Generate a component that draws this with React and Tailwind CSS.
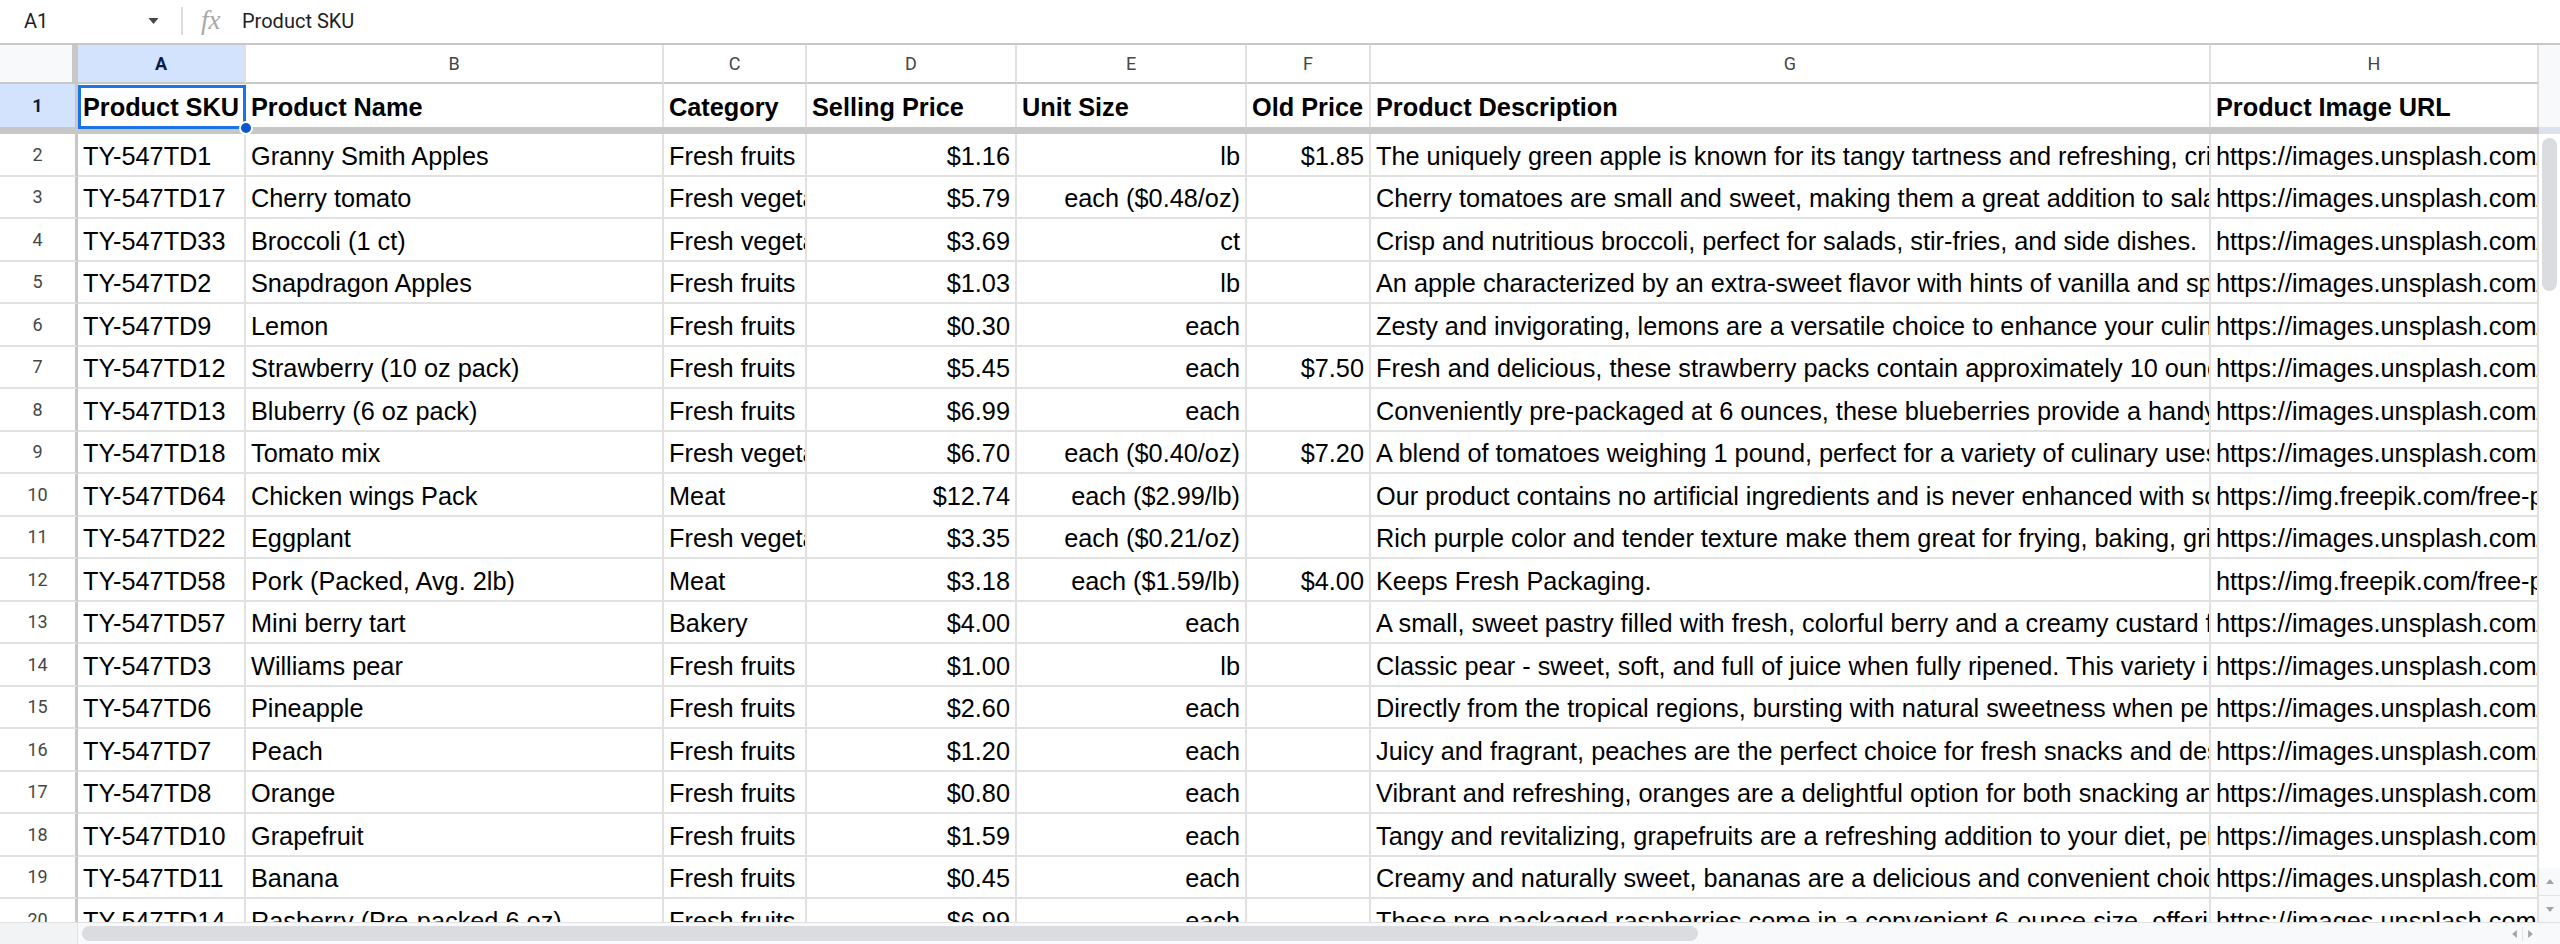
import React from "react";

const GRID = "grid grid-cols-[78px_168px_418px_143px_210px_230px_124px_840px_328px]";
const CELL_FONT = "font-['Liberation_Sans',Arial,sans-serif] text-[25.3px] text-black";
const UI_FONT = "font-['Roboto','Liberation_Sans',Arial,sans-serif]";

const U = "https://images.unsplash.com/photo-1568702846914-96b305d2aaeb?w=600";
const FP = "https://img.freepik.com/free-photo/raw-chicken-meat-isolated.jpg";

const rows = [
  ["TY-547TD1", "Granny Smith Apples", "Fresh fruits", "$1.16", "lb", "$1.85", "The uniquely green apple is known for its tangy tartness and refreshing, crisp texture.", U],
  ["TY-547TD17", "Cherry tomato", "Fresh vegetables", "$5.79", "each ($0.48/oz)", "", "Cherry tomatoes are small and sweet, making them a great addition to salads and snacks.", U],
  ["TY-547TD33", "Broccoli (1 ct)", "Fresh vegetables", "$3.69", "ct", "", "Crisp and nutritious broccoli, perfect for salads, stir-fries, and side dishes.", U],
  ["TY-547TD2", "Snapdragon Apples", "Fresh fruits", "$1.03", "lb", "", "An apple characterized by an extra-sweet flavor with hints of vanilla and spice.", U],
  ["TY-547TD9", "Lemon", "Fresh fruits", "$0.30", "each", "", "Zesty and invigorating, lemons are a versatile choice to enhance your culinary creations.", U],
  ["TY-547TD12", "Strawberry (10 oz pack)", "Fresh fruits", "$5.45", "each", "$7.50", "Fresh and delicious, these strawberry packs contain approximately 10 ounces of berries.", U],
  ["TY-547TD13", "Bluberry (6 oz pack)", "Fresh fruits", "$6.99", "each", "", "Conveniently pre-packaged at 6 ounces, these blueberries provide a handy snack.", U],
  ["TY-547TD18", "Tomato mix", "Fresh vegetables", "$6.70", "each ($0.40/oz)", "$7.20", "A blend of tomatoes weighing 1 pound, perfect for a variety of culinary uses.", U],
  ["TY-547TD64", "Chicken wings Pack", "Meat", "$12.74", "each ($2.99/lb)", "", "Our product contains no artificial ingredients and is never enhanced with solutions.", FP],
  ["TY-547TD22", "Eggplant", "Fresh vegetables", "$3.35", "each ($0.21/oz)", "", "Rich purple color and tender texture make them great for frying, baking, grilling.", U],
  ["TY-547TD58", "Pork (Packed, Avg. 2lb)", "Meat", "$3.18", "each ($1.59/lb)", "$4.00", "Keeps Fresh Packaging.", FP],
  ["TY-547TD57", "Mini berry tart", "Bakery", "$4.00", "each", "", "A small, sweet pastry filled with fresh, colorful berry and a creamy custard filling.", U],
  ["TY-547TD3", "Williams pear", "Fresh fruits", "$1.00", "lb", "", "Classic pear - sweet, soft, and full of juice when fully ripened. This variety is", U],
  ["TY-547TD6", "Pineapple", "Fresh fruits", "$2.60", "each", "", "Directly from the tropical regions, bursting with natural sweetness when perfectly ripe.", U],
  ["TY-547TD7", "Peach", "Fresh fruits", "$1.20", "each", "", "Juicy and fragrant, peaches are the perfect choice for fresh snacks and desserts.", U],
  ["TY-547TD8", "Orange", "Fresh fruits", "$0.80", "each", "", "Vibrant and refreshing, oranges are a delightful option for both snacking and juicing.", U],
  ["TY-547TD10", "Grapefruit", "Fresh fruits", "$1.59", "each", "", "Tangy and revitalizing, grapefruits are a refreshing addition to your diet, perfect for breakfast.", U],
  ["TY-547TD11", "Banana", "Fresh fruits", "$0.45", "each", "", "Creamy and naturally sweet, bananas are a delicious and convenient choice.", U],
  ["TY-547TD14", "Rasberry (Pre-packed 6 oz)", "Fresh fruits", "$6.99", "each", "", "These pre-packaged raspberries come in a convenient 6-ounce size, offering freshness.", U],
];

const headers = ["Product SKU", "Product Name", "Category", "Selling Price", "Unit Size", "Old Price", "Product Description", "Product Image URL"];
const letters = ["A", "B", "C", "D", "E", "F", "G", "H"];

function Cell({ children, right }) {
  return (
    <div
      className={`flex items-end overflow-hidden whitespace-nowrap border-r-2 border-b-2 border-[#e1e1e1] px-[5px] pb-[5px] leading-[28px] ${
        right ? "justify-end" : "justify-start"
      }`}
    >
      <span>{children}</span>
    </div>
  );
}

function Triangle({ dir, className }) {
  const pts = {
    down: "0,0 10,0 5,6",
    up: "0,6 10,6 5,0",
    left: "6,0 6,10 0,5",
    right: "0,0 0,10 6,5",
  }[dir];
  const box = dir === "up" || dir === "down" ? "0 0 10 6" : "0 0 6 10";
  return (
    <svg viewBox={box} className={className}>
      <polygon points={pts} fill="currentColor" />
    </svg>
  );
}

export default function App() {
  return (
    <div className="flex h-[944px] w-[2560px] flex-col overflow-hidden bg-white">
      {/* formula bar */}
      <div className={`flex h-[45px] flex-none items-center border-b-2 border-[#c7c7c7] pb-[2px] ${UI_FONT}`}>
        <div className="w-[148px] pl-[24px] text-[20px] text-[#1f1f1f]">A1</div>
        <Triangle dir="down" className="h-[6px] w-[11px] text-[#444746]" />
        <div className="ml-[22px] h-[28px] w-[2px] bg-[#dadce0]" />
        <span className="ml-[18px] w-[24px] font-['Liberation_Serif',serif] text-[27px] italic leading-none text-[#a8a8a8]">
          fx
        </span>
        <span className="ml-[17px] text-[20px] text-[#1f1f1f]">Product SKU</span>
      </div>

      <div className="flex min-h-0 flex-1">
        {/* sheet grid */}
        <div className="w-[2539px] flex-none overflow-hidden">
          {/* column letters */}
          <div className={`${GRID} h-[39px] ${UI_FONT} text-[18px] text-[#444746]`}>
            <div className="border-r-[6px] border-b-2 border-[#c7c7c7] bg-[#f8f9fa]" />
            {letters.map((l, i) => (
              <div
                key={l}
                className={`flex items-center justify-center border-r-2 border-b-2 border-r-[#e1e1e1] border-b-[#c7c7c7] ${
                  i === 0 ? "bg-[#d3e3fd] font-bold text-[#041e49]" : ""
                }`}
              >
                {l}
              </div>
            ))}
          </div>

          {/* header row 1 */}
          <div className={`${GRID} h-[43px] ${CELL_FONT} font-bold`}>
            <div className={`flex items-center justify-center border-r-[3px] border-[#c7c7c7] bg-[#d3e3fd] text-[18px] text-[#041e49] ${UI_FONT}`}>
              1
            </div>
            {headers.map((h, i) => (
              <div
                key={h}
                className={`relative flex items-end whitespace-nowrap border-r-2 border-[#e1e1e1] px-[5px] pb-[6px] leading-[28px] ${
                  i === 0 ? "" : "overflow-hidden"
                }`}
              >
                <span>{h}</span>
                {i === 0 && (
                  <>
                    <div className="absolute left-0 top-[1px] z-10 h-[44px] w-[168px] border-[3px] border-[#1a73e8]" />
                    <div className="absolute left-[161px] top-[37px] z-20 h-[14px] w-[14px] rounded-full border-2 border-white bg-[#0b57d0]" />
                  </>
                )}
              </div>
            ))}
          </div>

          {/* freeze bar */}
          <div className="h-[7px] bg-[#c7c7c7]" />

          {/* data rows */}
          {rows.map((r, idx) => (
            <div key={r[0]} className={`${GRID} h-[42.5px] ${CELL_FONT}`}>
              <div className={`flex items-center justify-center border-r-[3px] border-b-2 border-r-[#c7c7c7] border-b-[#e1e1e1] text-[18px] text-[#444746] ${UI_FONT}`}>
                {idx + 2}
              </div>
              <Cell>{r[0]}</Cell>
              <Cell>{r[1]}</Cell>
              <Cell>{r[2]}</Cell>
              <Cell right>{r[3]}</Cell>
              <Cell right>{r[4]}</Cell>
              <Cell right>{r[5]}</Cell>
              <Cell>{r[6]}</Cell>
              <Cell>{r[7]}</Cell>
            </div>
          ))}
        </div>

        {/* vertical scrollbar */}
        <div className="flex w-[21px] flex-none flex-col">
          <div className="h-[82px] bg-[#f8f9fa]" />
          <div className="h-[7px] bg-[#dde3ea]" />
          <div className="flex flex-1 flex-col bg-white pt-[4px] pl-[3px] pr-[3px]">
            <div className="h-[153px] w-[15px] rounded-full bg-[#dadce0]" />
            <div className="mt-auto -ml-[3px] -mr-[3px] flex h-[27px] items-center justify-center bg-[#f8f9fa]">
              <Triangle dir="up" className="h-[5px] w-[8px] text-[#a0a4a8]" />
            </div>
            <div className="-ml-[3px] -mr-[3px] flex h-[27px] items-center justify-center border-t border-[#e3e3e3] bg-[#f8f9fa]">
              <Triangle dir="down" className="h-[5px] w-[8px] text-[#a0a4a8]" />
            </div>
          </div>
        </div>
      </div>

      {/* horizontal scrollbar */}
      <div className="flex h-[22px] flex-none border-t border-[#e1e1e1] bg-[#f8f9fa]">
        <div className="w-[78px] flex-none border-r border-[#e1e1e1] bg-[#f1f3f4]" />
        <div className="flex flex-1 items-center pl-[4px]">
          <div className="h-[15px] w-[1616px] rounded-full bg-[#dadce0]" />
        </div>
        <div className="flex w-[34px] flex-none items-center justify-center gap-[5px]">
          <Triangle dir="left" className="h-[8px] w-[5px] text-[#a0a4a8]" />
          <div className="h-[14px] w-px bg-[#e3e3e3]" />
          <Triangle dir="right" className="h-[8px] w-[5px] text-[#a0a4a8]" />
        </div>
        <div className="w-[21px] flex-none bg-[#f8f9fa]" />
      </div>
    </div>
  );
}
